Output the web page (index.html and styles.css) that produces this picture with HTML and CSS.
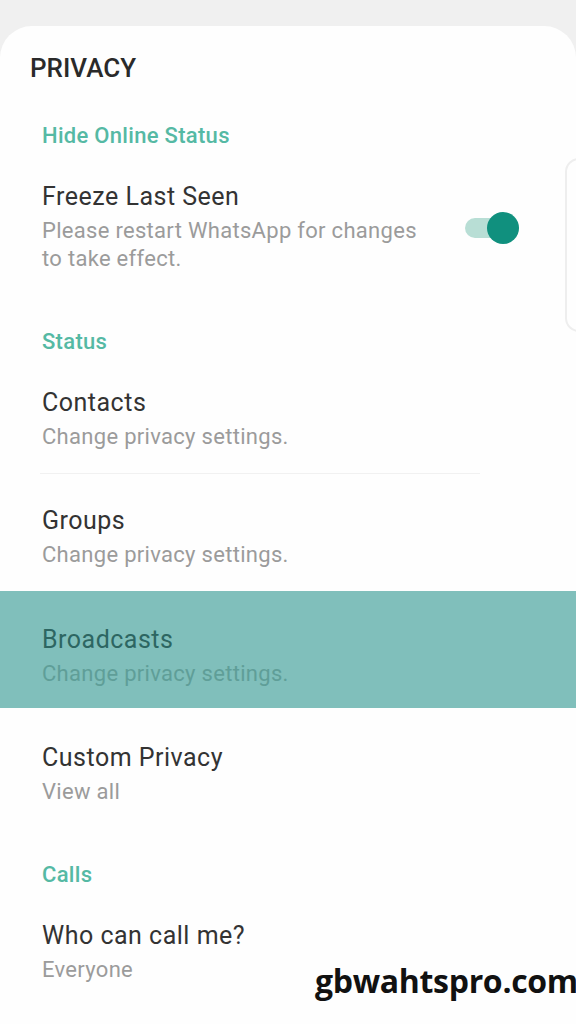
FILE: index.html
```html
<!DOCTYPE html>
<html>
<head>
<meta charset="utf-8">
<link rel="stylesheet" href="styles.css">
</head>
<body>
<div class="screen">
  <div class="card">
    <h1 class="page-title">PRIVACY</h1>

    <div class="section-header first">Hide Online Status</div>
    <div class="row row-toggle">
      <div class="row-text">
        <div class="row-title">Freeze Last Seen</div>
        <div class="row-sub">Please restart WhatsApp for changes<br>to take effect.</div>
      </div>
      <div class="toggle"><span class="knob"></span></div>
    </div>

    <div class="section-header">Status</div>
    <div class="row">
      <div class="row-title">Contacts</div>
      <div class="row-sub">Change privacy settings.</div>
    </div>
    <div class="divider"></div>
    <div class="row">
      <div class="row-title">Groups</div>
      <div class="row-sub">Change privacy settings.</div>
    </div>
    <div class="row highlighted">
      <div class="row-title">Broadcasts</div>
      <div class="row-sub">Change privacy settings.</div>
    </div>
    <div class="row after-highlight">
      <div class="row-title">Custom Privacy</div>
      <div class="row-sub">View all</div>
    </div>

    <div class="section-header calls">Calls</div>
    <div class="row">
      <div class="row-title">Who can call me?</div>
      <div class="row-sub">Everyone</div>
    </div>
  </div>
  <div class="edge-tab"></div>
  <div class="watermark">gbwahtspro.com</div>
</div>
</body>
</html>
```

FILE: styles.css
```css
html, body {
  margin: 0;
  padding: 0;
}
body {
  background: #f0f0f0;
  font-family: Roboto, "Noto Sans", "Liberation Sans", sans-serif;
  width: 576px;
  height: 1024px;
  overflow: hidden;
}
.screen {
  position: relative;
  width: 576px;
  height: 1024px;
  padding-top: 26px;
  box-sizing: border-box;
}
.card {
  background: #fefefe;
  border-radius: 32px 32px 0 0;
  height: 998px;
  padding-top: 26px;
  box-sizing: border-box;
}
.page-title {
  margin: 0 0 0 30px;
  font-size: 26px;
  line-height: 32px;
  font-weight: 500;
  color: #2a2a2a;
}
.section-header {
  margin: 32px 0 0 42px;
  font-size: 22px;
  line-height: 28px;
  font-weight: 500;
  color: #55b9a4;
  letter-spacing: 0.3px;
}
.section-header.first {
  margin-top: 38px;
}
.section-header.calls {
  margin-top: 36px;
}
.row {
  padding: 31px 42px 22px 42px;
  display: flex;
  flex-direction: column;
}
.row-title {
  font-size: 25px;
  line-height: 32px;
  color: #333333;
  letter-spacing: 0.5px;
}
.row-sub {
  margin-top: 4px;
  font-size: 22px;
  line-height: 28px;
  color: #9b9b9b;
  letter-spacing: 0.3px;
}
.row-toggle {
  flex-direction: row;
  align-items: center;
  justify-content: space-between;
  padding-right: 61px;
  padding-bottom: 23px;
}
.toggle {
  position: relative;
  width: 50px;
  height: 20px;
  border-radius: 10px;
  background: #b8ded5;
  margin-top: 2px;
}
.knob {
  position: absolute;
  right: -4px;
  top: -6px;
  width: 32px;
  height: 32px;
  border-radius: 50%;
  background: #10907e;
}
.divider {
  height: 1px;
  background: #f1f1f1;
  margin: 0 96px 0 40px;
}
.row.highlighted {
  background: #80bfbb;
  padding-top: 33px;
  padding-bottom: 20px;
}
.row.highlighted .row-title {
  color: #2d6662;
}
.row.highlighted .row-sub {
  color: #5f9e98;
}
.row.after-highlight {
  padding-top: 34px;
  padding-bottom: 19px;
}
.edge-tab {
  position: absolute;
  left: 565px;
  top: 158px;
  width: 24px;
  height: 170px;
  border: 2px solid #eeeeee;
  border-radius: 16px;
  background: #fefefe;
}
.watermark {
  position: absolute;
  right: -2px;
  top: 958px;
  font-family: "Open Sans", "Noto Sans", sans-serif;
  font-weight: 700;
  font-size: 32px;
  line-height: 46px;
  color: #111111;
  letter-spacing: -0.3px;
}
```
